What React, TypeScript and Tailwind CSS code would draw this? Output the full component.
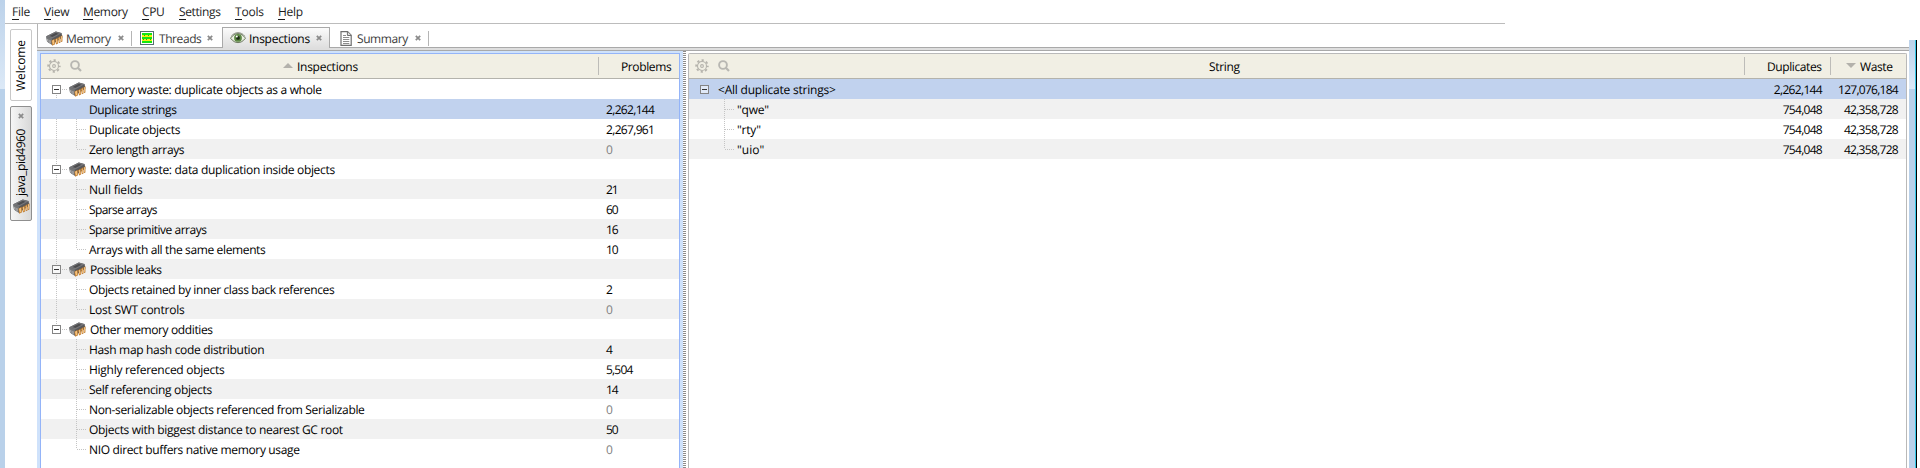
import { ReactNode, useLayoutEffect, useRef, useState } from "react";

/** Text run spaced out evenly so that it takes exactly `w` pixels. */
function Fit({ w, children, className = "pt-[2px]" }: { w: number; children: string; className?: string }) {
  const ref = useRef<HTMLSpanElement>(null);
  const [spacing, setSpacing] = useState(0);
  useLayoutEffect(() => {
    if (ref.current) {
      setSpacing((w - ref.current.offsetWidth) / children.length);
    }
  }, []);
  return (
    <span ref={ref} className={`inline-block whitespace-pre ${className}`} style={{ letterSpacing: `${spacing}px` }}>
      {children}
    </span>
  );
}

function Chip({ className = "" }: { className?: string }) {
  return (
    <svg viewBox="0 0 17 15" className={`h-[15px] w-[17px] shrink-0 ${className}`}>
      <path d="M0.3 5.2 9.8 0.4 15.6 2 16.4 6.5 6 13.8 1 10.4Z" fill="#58585a" />
      <path d="M0.3 5.2 9.8 0.4 15.6 2.2 6.2 7.4Z" fill="#77777a" />
      <path d="M3.5 5 9.8 1.8 12.6 2.8 6.4 6Z" fill="#4c4c4e" />
      <path d="M0.3 5.2 6.2 7.4 5.6 13.8 1 10.4Z" fill="#747577" />
      <path d="M1.2 7.8 2.4 8.4V11.2L1.2 10.2ZM3.4 8.8 4.6 9.4V12.8L3.4 12Z" fill="#b5b5b5" />
      <path d="M5.4 9.8 8.6 7.8 9 13.2 6.2 14.8ZM9.200 8.200 11.600 6.600 12 12.400 10 13.600ZM12.100 6.800 14 5.200 14.500 11.400 12.800 12.200ZM14.400 5.400 16.400 4.200V10.400L15 11Z" fill="#b87528" />
      <path d="M6 9.800 8.100 8.600 8.400 12.800 6.800 13.800ZM9.700 8.600 11.200 7.500 11.500 12 10.400 12.600ZM12.600 7 13.600 6.200 14 10.800 13.200 11.400ZM14.900 5.600 16 5V9.800L15.300 10.200Z" fill="#f6c27c" />
    </svg>
  );
}

function CloseX() {
  return (
    <svg viewBox="0 0 6 6" className="h-[6px] w-[6px] shrink-0">
      <path d="M0.800 0.800 5.200 5.200M5.200 0.800 0.800 5.200" stroke="#8a8a8a" strokeWidth="1.700" />
    </svg>
  );
}

function ThreadsIcon() {
  return (
    <svg viewBox="0 0 14 14" className="h-[14px] w-[14px] shrink-0" shapeRendering="crispEdges">
      <rect width="14" height="14" fill="#55706f" />
      <rect x="1" y="1" width="12" height="12" fill="#fff" />
      <path d="M2 2h10v2H2zM2 6h10v2H2zM2 10h10v2H2z" fill="#12e612" />
      <path d="M2 4h10v2H2zM2 8h10v2H2z" fill="#f4ee10" />
      <path d="M4 4h1v1H4zM8 4h1v1H8zM3 8h1v1H3zM6 8h1v1H6zM10 8h1v1h-1z" fill="#12b812" />
    </svg>
  );
}

function EyeIcon() {
  return (
    <svg viewBox="0 0 16 12" className="h-[12px] w-[16px] shrink-0">
      <path d="M0.5 6.2C3 2.8 5.4 1.6 8 1.6S13.2 3 15.5 6.2C13 9.4 10.6 10.6 8 10.6S3 9.4 0.5 6.2Z" fill="#e9efe0" stroke="#5d6b50" strokeWidth="0.9" />
      <path d="M1.2 4.2C3.5 1.6 5.5 0.7 8 0.7S12.6 1.6 14.8 4.2" fill="none" stroke="#7c8572" strokeWidth="0.9" />
      <circle cx="8" cy="5.9" r="3.9" fill="#5b8743" />
      <circle cx="8" cy="5.9" r="1.9" fill="#1c2a14" />
      <circle cx="6.8" cy="4.6" r="1" fill="#fff" />
    </svg>
  );
}

function DocIcon() {
  return (
    <svg viewBox="0 0 12 15" className="h-[15px] w-[12px] shrink-0">
      <path d="M1 0.7H7.6L11.2 4.3V14.3H1Z" fill="#fff" stroke="#6f6f6f" strokeWidth="1.2" />
      <path d="M7.4 0.7V4.5H11.2" fill="#ddd" stroke="#6f6f6f" />
      <path d="M3 4.5H6M3 6.5H9.3M3 8.5H9.3M3 10.5H9.3M3 12.5H9.3" stroke="#8d8d8d" />
    </svg>
  );
}

function Gear() {
  return (
    <svg viewBox="0 0 14 14" className="h-[14px] w-[14px] shrink-0" fill="none" stroke="#b5b3ac">
      <circle cx="7" cy="7" r="5.8" strokeWidth="1.8" strokeDasharray="2.2 2.355" strokeDashoffset="1.1" />
      <circle cx="7" cy="7" r="4.5" strokeWidth="1.1" />
      <circle cx="7" cy="7" r="1.4" strokeWidth="1.1" />
    </svg>
  );
}

function Search() {
  return (
    <svg viewBox="0 0 12 12" className="h-[12px] w-[12px] shrink-0" fill="none" stroke="#b8b7b2">
      <circle cx="5" cy="5" r="3.9" strokeWidth="1.9" />
      <path d="M7.8 7.8 11 11" strokeWidth="2.2" />
    </svg>
  );
}

function MinusBox() {
  return (
    <svg viewBox="0 0 9 9" className="h-[9px] w-[9px] shrink-0" shapeRendering="crispEdges">
      <rect x="0.5" y="0.5" width="8" height="8" fill="#fff" fillOpacity="0.5" stroke="#848484" />
      <path d="M2 4.5H7" stroke="#333" />
    </svg>
  );
}

/** Dotted guides on the left of a tree row. */
function Guides({ w, d }: { w: number; d: string }) {
  return (
    <svg width={w} height="20" viewBox={`0 0 ${w} 20`} className="shrink-0" shapeRendering="crispEdges">
      <path d={d} fill="none" stroke="#c4c4c4" strokeDasharray="1 1" />
    </svg>
  );
}

const menus: [string, number, string][] = [
  ["File", 18, "w-[32px]"],
  ["View", 25, "w-[39px]"],
  ["Memory", 45, "w-[59px]"],
  ["CPU", 23, "w-[37px]"],
  ["Settings", 42, "w-[56px]"],
  ["Tools", 29, "w-[43px]"],
  ["Help", 25, "w-[40px]"],
];

type Row = { label: string; w: number; group?: boolean; value?: string; vw?: number; last?: boolean; tail?: boolean };

const rows: Row[] = [
  { label: "Memory waste: duplicate objects as a whole", w: 232, group: true },
  { label: "Duplicate strings", w: 88, value: "2,262,144", vw: 48 },
  { label: "Duplicate objects", w: 91, value: "2,267,961", vw: 48 },
  { label: "Zero length arrays", w: 95, value: "0", vw: 6, last: true },
  { label: "Memory waste: data duplication inside objects", w: 245, group: true },
  { label: "Null fields", w: 53, value: "21", vw: 12 },
  { label: "Sparse arrays", w: 68, value: "60", vw: 12 },
  { label: "Sparse primitive arrays", w: 118, value: "16", vw: 12 },
  { label: "Arrays with all the same elements", w: 176, value: "10", vw: 12, last: true },
  { label: "Possible leaks", w: 72, group: true },
  { label: "Objects retained by inner class back references", w: 245, value: "2", vw: 6 },
  { label: "Lost SWT controls", w: 95, value: "0", vw: 6, last: true },
  { label: "Other memory oddities", w: 123, group: true },
  { label: "Hash map hash code distribution", w: 175, value: "4", vw: 6, tail: true },
  { label: "Highly referenced objects", w: 135, value: "5,504", vw: 27, tail: true },
  { label: "Self referencing objects", w: 123, value: "14", vw: 12, tail: true },
  { label: "Non-serializable objects referenced from Serializable", w: 275, value: "0", vw: 6, tail: true },
  { label: "Objects with biggest distance to nearest GC root", w: 254, value: "50", vw: 12, tail: true },
  { label: "NIO direct buffers native memory usage", w: 211, value: "0", vw: 6, last: true, tail: true },
];

function rowBackground(i: number, selected: number) {
  if (i === selected) return "bg-[#c1d2ee]";
  return i % 2 ? "bg-[#f1f1f1]" : "bg-white";
}

function InspectionRow({ row, i }: { row: Row; i: number }) {
  const outer = row.tail ? "" : "M15.5 0V20";
  const inner = row.last ? "M35.5 0V10" : "M35.5 0V20";
  const groupOuter = i === 0 ? "M4.5 14V20" : i === 12 ? "M4.5 0V6" : "M4.5 0V6M4.5 14V20";
  return (
    <div className={`flex h-[20px] shrink-0 ${rowBackground(i, 1)}`}>
      <div className="flex w-[565px] items-center">
        {row.group ? (
          <>
            <div className="flex w-[28px] shrink-0 items-center pl-[11px]">
              <div className="grid place-items-center">
                <div className="col-start-1 row-start-1">
                  <Guides w={17} d={`${groupOuter}M10 10.5H15`} />
                </div>
                <div className="col-start-1 row-start-1 -ml-[8px]">
                  <MinusBox />
                </div>
              </div>
            </div>
            <Chip className="mr-[4px]" />
          </>
        ) : (
          <div className="w-[48px] shrink-0">{i !== 1 && <Guides w={46} d={`${outer}${inner}M36 10.5H45`} />}</div>
        )}
        <Fit w={row.w}>{row.label}</Fit>
      </div>
      {row.value && (
        <div className={`flex items-center ${row.value === "0" ? "text-[#808080]" : ""}`}>
          <Fit w={row.vw!}>{row.value}</Fit>
        </div>
      )}
    </div>
  );
}

const strings: { label: string; w: number; dup: string; dw: number; waste: string; ww: number }[] = [
  { label: "<All duplicate strings>", w: 118, dup: "2,262,144", dw: 48, waste: "127,076,184", ww: 60 },
  { label: '"qwe"', w: 32, dup: "754,048", dw: 39, waste: "42,358,728", ww: 54 },
  { label: '"rty"', w: 24, dup: "754,048", dw: 39, waste: "42,358,728", ww: 54 },
  { label: '"uio"', w: 27, dup: "754,048", dw: 39, waste: "42,358,728", ww: 54 },
];

function Tab({ width, children }: { width: string; children: ReactNode }) {
  return (
    <div className={`flex h-[24px] shrink-0 items-center border-b border-[#a9a9a9] pt-[5px] text-[#3c3c3c] ${width}`}>
      {children}
    </div>
  );
}

export default function App() {
  return (
    <div className="flex h-[468px] w-[1920px] overflow-hidden bg-white font-['Open_Sans','Noto_Sans',sans-serif] text-[12px] leading-[20px] text-black [text-rendering:geometricPrecision]">
      <div className="flex w-[5px] shrink-0 flex-col">
        <div className="h-[89px] bg-linear-to-b from-[#bcd2ea] to-[#dce9f7]" />
        <div className="flex-1 bg-[#b9d1ea]" />
      </div>

      <div className="flex w-[1904px] shrink-0 flex-col">
        <div className="flex h-[23px] shrink-0 items-center pl-[7px] text-[#1c1c1c]">
          {menus.map(([name, w, slot]) => (
            <div key={name} className={slot}>
              <div className="inline-flex items-center">
                <div className="grid">
                  <Fit w={w} className="col-start-1 row-start-1">
                    {name}
                  </Fit>
                  <span className="col-start-1 row-start-1 mb-[2px] self-end justify-self-start border-b border-[#1c1c1c]">
                    <span className={name === "Memory" ? "block w-[10px]" : "block w-[7px]"} />
                  </span>
                </div>
              </div>
            </div>
          ))}
        </div>
        <div className="h-px w-[1500px] shrink-0 bg-[#bcbcbc]" />

        <div className="flex min-h-0 flex-1">
          <div className="flex w-[32px] shrink-0 flex-col gap-[5px] pt-[5px] pl-[5px]">
            <div className="flex h-[72px] w-[22px] items-center justify-center rounded-[2px] border border-[#c8c8c8]">
              <div className="rotate-180 [writing-mode:vertical-rl]">
                <span className="text-[12px] leading-[20px] tracking-[-0.1px]">Welcome</span>
              </div>
            </div>
            <div className="flex h-[115px] w-[22px] flex-col items-center rounded-[2px] border border-[#8f8f8f] bg-linear-to-r from-[#f6f6f6] to-[#d8d8d8] pt-[6px]">
              <CloseX />
              <div className="mt-[7px] h-[70px] rotate-180 [writing-mode:vertical-rl]">
                <span className="text-[12px] leading-[20px] tracking-[-0.5px]">java_pid4960</span>
              </div>
              <Chip className="mt-[3px]" />
            </div>
          </div>

          <div className="flex min-w-0 flex-1 flex-col">
            <div className="flex h-[24px] shrink-0 items-end">
              <Tab width="w-[185px] border-l border-l-[#b5b5b5] pl-[8px]">
                <Chip />
                <div className="ml-[3px] w-[52px]">
                  <Fit w={45}>Memory</Fit>
                </div>
                <CloseX />
                <div className="ml-[7px] h-[15px] w-px bg-[#b5b5b5]" />
                <div className="ml-[8px]">
                  <ThreadsIcon />
                </div>
                <div className="ml-[5px] w-[48px]">
                  <Fit w={42}>Threads</Fit>
                </div>
                <CloseX />
              </Tab>
              <div className="flex h-[21px] w-[108px] shrink-0 items-center border border-b-0 border-[#a9a9a9] bg-linear-to-b from-[#fbfbfb] to-[#dedede] pl-[7px]">
                <EyeIcon />
                <div className="ml-[3px] w-[67px]">
                  <Fit w={61}>Inspections</Fit>
                </div>
                <CloseX />
              </div>
              <Tab width="flex-1 pl-[10px]">
                <DocIcon />
                <div className="ml-[5px] w-[58px]">
                  <Fit w={51}>Summary</Fit>
                </div>
                <CloseX />
                <div className="ml-[7px] h-[15px] w-px bg-[#b5b5b5]" />
              </Tab>
            </div>
            <div className="h-[3px] shrink-0 border-b border-[#a9a9a9] bg-[#dedede]" />

            <div className="flex min-h-0 flex-1">
              <div className="w-[646px] shrink-0 border-x-3 border-t-2 border-[#cfe2fb]">
                <div className="flex h-full flex-col border border-b-0 border-[#94b4f8]">
                  <div className="flex h-[25px] shrink-0 items-center border-b border-[#b4b3ac] bg-[#f1efe4] pl-[6px]">
                    <Gear />
                    <div className="ml-[9px]">
                      <Search />
                    </div>
                    <svg viewBox="0 0 10 5" className="mb-[2px] ml-[201px] h-[5px] w-[10px]">
                      <path d="M5 0 10 5H0Z" fill="#b3b1ab" />
                    </svg>
                    <div className="ml-[4px] w-[301px]">
                      <Fit w={61}>Inspections</Fit>
                    </div>
                    <div className="h-[18px] w-px bg-[#bdbcb8]" />
                    <div className="ml-[22px]">
                      <Fit w={50}>Problems</Fit>
                    </div>
                  </div>
                  {rows.map((row, i) => (
                    <InspectionRow key={row.label} row={row} i={i} />
                  ))}
                </div>
              </div>

              <div className="w-[3px] shrink-0 bg-[repeating-linear-gradient(to_bottom,#8c8c8c_0_1px,#fff_1px_2px)]" />

              <div className="mt-[2px] ml-[2px] flex w-[1219px] shrink-0 flex-col rounded-t-[2px] border border-b-0 border-[#b9b9b9]">
                <div className="flex h-[25px] shrink-0 items-center border-b border-[#b4b3ac] bg-[#f1efe4] pl-[6px]">
                  <Gear />
                  <div className="ml-[9px]">
                    <Search />
                  </div>
                  <div className="ml-[479px] w-[535px]">
                    <Fit w={31}>String</Fit>
                  </div>
                  <div className="h-[18px] w-px bg-[#bdbcb8]" />
                  <div className="ml-[22px] w-[63px]">
                    <Fit w={55}>Duplicates</Fit>
                  </div>
                  <div className="h-[18px] w-px bg-[#bdbcb8]" />
                  <svg viewBox="0 0 10 5" className="mb-[2px] ml-[15px] h-[5px] w-[10px]">
                    <path d="M0 0H10L5 5Z" fill="#b3b1ab" />
                  </svg>
                  <div className="ml-[4px]">
                    <Fit w={32}>Waste</Fit>
                  </div>
                </div>
                {strings.map((s, i) => (
                  <div key={s.label} className={`flex h-[20px] shrink-0 items-center ${rowBackground(i, 0)}`}>
                    {i === 0 ? (
                      <div className="w-[29px] shrink-0 pl-[11px]">
                        <MinusBox />
                      </div>
                    ) : (
                      <div className="w-[48px] shrink-0">
                        <Guides w={46} d={`${i === 3 ? "M35.5 0V10" : "M35.5 0V20"}M36 10.5H45`} />
                      </div>
                    )}
                    <div className="flex-1">
                      <Fit w={s.w}>{s.label}</Fit>
                    </div>
                    <Fit w={s.dw}>{s.dup}</Fit>
                    <div className="flex w-[76px] justify-end">
                      <Fit w={s.ww}>{s.waste}</Fit>
                    </div>
                    <div className="w-[8px]" />
                  </div>
                ))}
              </div>
            </div>
          </div>
        </div>
      </div>

      <div className="mt-[40px] flex w-[6px] shrink-0 flex-col">
        <div className="h-[49px] bg-linear-to-b from-[#bcd2ea] to-[#dce9f7]" />
        <div className="flex-1 bg-[#b9d1ea]" />
      </div>
      <div className="mt-[40px] w-px shrink-0 bg-[#35c8e8]" />
      <div className="mt-[40px] w-px shrink-0 bg-black" />
    </div>
  );
}
